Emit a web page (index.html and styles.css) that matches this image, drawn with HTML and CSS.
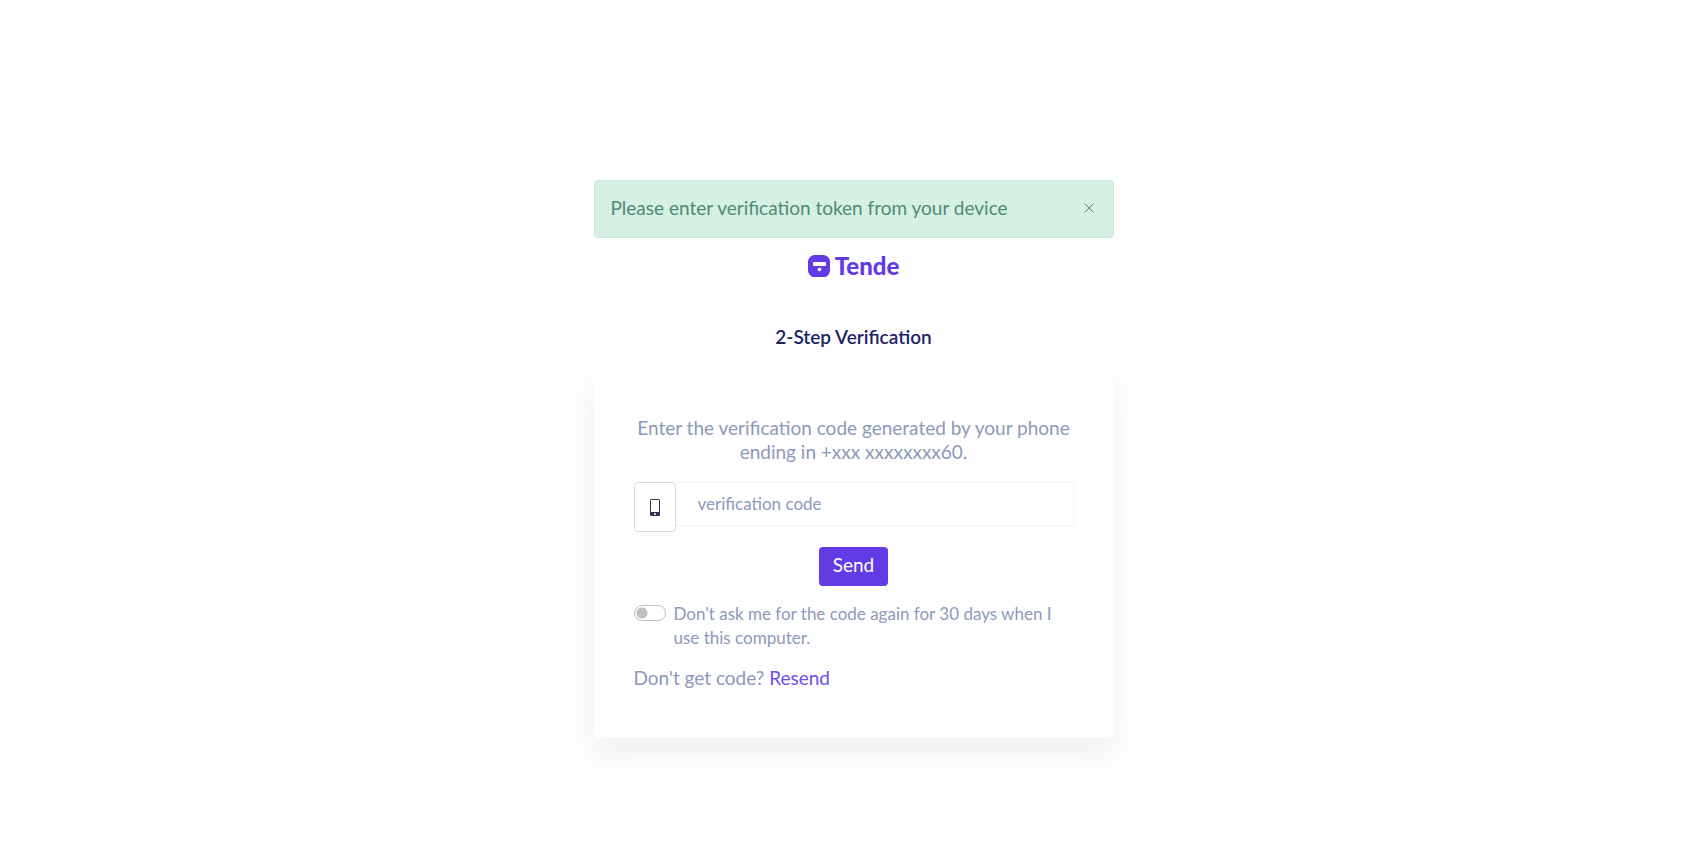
FILE: index.html
```
<!DOCTYPE html>
<html lang="en">
<head>
    <meta charset="UTF-8">
    <meta name="viewport" content="width=device-width, initial-scale=1.0">
    <title>2-Step Verification</title>
    <link rel="stylesheet" href="styles.css">
</head>
<body>

<main class="page">
    <div class="container">
        <div class="alert" role="alert">
            <span>Please enter verification token from your device</span>
            <button type="button" class="alert-close" aria-label="Close">
                <svg width="10" height="10" viewBox="0 0 10 10" fill="none" stroke="currentColor"><path d="M0.5 0.5l9 9M9.5 0.5l-9 9"/></svg>
            </button>
        </div>

        <a class="logo" href="#">
            <svg width="22" height="22" viewBox="0 0 22 22" aria-hidden="true">
                <path fill="#633be4" d="M6 0h10q5 1 6 6v10q-1 5-5 6H5q-4-1-5-6V6q1-5 6-6z"/>
                <rect x="5" y="7" width="13" height="4" rx="1" fill="#fff"/>
                <circle cx="11.500" cy="14.500" r="1.800" fill="#fff"/>
            </svg>
            <span>Tende</span>
        </a>

        <h1 class="title">2-Step Verification</h1>

        <form class="card">
            <p class="intro">Enter the verification code generated by your phone ending in +xxx xxxxxxxx60.</p>

            <div class="code-group">
                <label class="code-icon" for="token" aria-label="Verification code">
                    <svg width="10" height="17" viewBox="0 0 10 17" aria-hidden="true">
                        <rect width="10" height="17" rx="1.500" fill="#2b3553"/>
                        <rect x="1" y="1" width="8" height="12" fill="#fff"/>
                        <circle cx="5" cy="15" r="1" fill="#fff"/>
                    </svg>
                </label>
                <input class="code-input" type="text" id="token" name="token" placeholder="verification code">
            </div>

            <button type="submit" class="button">Send</button>

            <div class="remember">
                <input class="switch" type="checkbox" role="switch" id="remember" name="remember">
                <label for="remember">Don't ask me for the code again for 30 days when I use this computer.</label>
            </div>

            <p class="resend">Don't get code? <a href="#">Resend</a></p>
        </form>
    </div>
</main>

</body>
</html>
```
FILE: styles.css
```
* { box-sizing: border-box; }
body { margin: 0; font-family: Lato, "Open Sans", sans-serif; font-size: 19px; font-weight: 400; line-height: 24px; color: #8d99bd; background-color: #fefefe; }
.page { min-height: 100vh; display: flex; align-items: center; justify-content: center; padding-top: 54px; }
.container { width: 100%; max-width: 520px; display: flex; flex-direction: column; align-items: center; }

.alert { width: 100%; display: flex; align-items: center; justify-content: space-between; padding: 15px 19px 17px 16px; margin-bottom: 16px; color: #4f8b72; background-color: #d6f0e4; border: 1px solid #c5eada; border-radius: 4px; }
.alert-close { display: flex; padding: 0; border: none; background: none; color: #5c8c78; cursor: pointer; }

.logo { display: flex; align-items: center; gap: 5px; color: #633be4; font-size: 24px; font-weight: 900; text-decoration: none; }
.title { margin: 47px 0 19px; color: #1b2469; font-size: 19px; font-weight: 600; line-height: 24px; }

.card { width: 100%; padding: 48px 40px; background-color: #fefefe; border-radius: 4px; box-shadow: 0 16px 32px rgba(0,0,0,0.06); }
.intro { margin: 0 0 18px; text-align: center; }

.code-group { display: flex; align-items: flex-start; height: 50px; margin-bottom: 15px; }
.code-icon { width: 42px; height: 50px; flex: none; display: flex; align-items: center; justify-content: center; border: 1px solid #d5dae5; border-radius: 4px; background-color: #fff; }
.code-input { flex: 1; min-width: 0; height: 44px; padding: 0 22px 2px; border: 1px solid #f0f2f8; border-left: none; border-radius: 0 4px 4px 0; font: inherit; font-size: 17px; color: #1b2469; background-color: #fff; }
.code-input::placeholder { color: #8d99bd; opacity: 1; }

.button { display: block; margin: 0 auto 16px; height: 39px; padding: 0 14px 3px; border: none; border-radius: 4px; font: inherit; color: #fff; background-color: #633be4; cursor: pointer; }
.button:hover { background-color: #512ccc; }

.remember { display: flex; align-items: flex-start; gap: 8px; padding-right: 16px; margin-bottom: 16px; font-size: 17px; }
.switch { appearance: none; flex: none; width: 32px; height: 16px; margin: 3px 0; border: 1px solid #bfbfbf; border-radius: 8px; background: #fff radial-gradient(circle at 7px 7px, #bfbfbf 5px, transparent 6px); cursor: pointer; }
.switch:checked { border-color: #633be4; background: #633be4 radial-gradient(circle at 23px 7px, #fff 5px, transparent 6px); }

.resend { margin: 0; }
.resend a { color: #6a50ea; text-decoration: none; }
```
